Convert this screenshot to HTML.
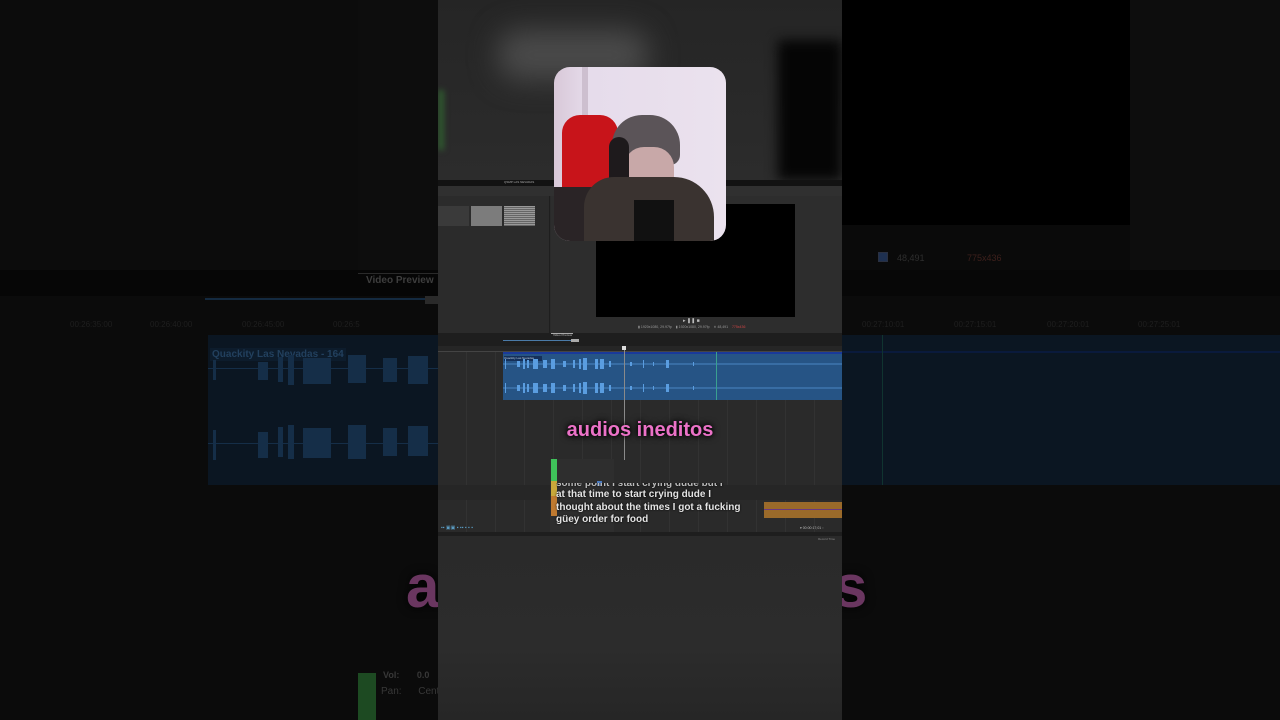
<!DOCTYPE html>
<html><head><meta charset="utf-8"><style>
*{margin:0;padding:0;box-sizing:border-box}
body{width:1280px;height:720px;overflow:hidden;background:#0b0b0b;position:relative;font-family:"Liberation Sans",sans-serif}
.a{position:absolute}
</style></head><body>
<div class="a" style="left:0;top:0;width:438px;height:270px;background:#0c0c0c"></div>
<div class="a" style="left:358px;top:0;width:80px;height:270px;background:#0d0d0d"></div>
<div class="a" style="left:0;top:270px;width:438px;height:26px;background:#060606"></div>
<div class="a" style="left:358px;top:273px;width:80px;height:1px;background:#2a2a2a"></div>
<div class="a" style="left:366px;top:275px;color:#3e3e3e;font-size:10px;font-weight:bold">Video Preview</div>
<div class="a" style="left:205px;top:298px;width:220px;height:2px;background:#142a40"></div>
<div class="a" style="left:425px;top:296px;width:13px;height:8px;background:#2a2a2a"></div>
<div class="a" style="left:0;top:320px;width:438px;height:14px;color:#1f1f1f;font-size:8px">
<span class="a" style="left:70px;top:0">00:26:35:00</span><span class="a" style="left:150px;top:0">00:26:40:00</span><span class="a" style="left:242px;top:0">00:26:45:00</span><span class="a" style="left:333px;top:0">00:26:5</span></div>
<div class="a" style="left:842px;top:0;width:288px;height:225px;background:#000"></div>
<div class="a" style="left:1130px;top:0;width:150px;height:270px;background:#0d0d0d"></div>
<div class="a" style="left:842px;top:225px;width:288px;height:45px;background:#0a0a0a"></div>
<div class="a" style="left:878px;top:252px;width:10px;height:10px;border:1px solid #2a3040;background:#1e3050"></div>
<div class="a" style="left:897px;top:253px;color:#2e2e2e;font-size:9px">48,491</div>
<div class="a" style="left:967px;top:253px;color:#3e201c;font-size:9px">775x436</div>
<div class="a" style="left:842px;top:270px;width:438px;height:26px;background:#070707"></div>
<div class="a" style="left:842px;top:320px;width:438px;height:14px;color:#1f1f1f;font-size:8px">
<span class="a" style="left:20px;top:0">00:27:10:01</span><span class="a" style="left:112px;top:0">00:27:15:01</span><span class="a" style="left:205px;top:0">00:27:20:01</span><span class="a" style="left:296px;top:0">00:27:25:01</span></div>
<div class="a" style="left:208px;top:335px;width:1072px;height:150px;background:#0b1622"></div>
<div class="a" style="left:842px;top:351px;width:438px;height:2px;background:#0a1a3c"></div>
<div class="a" style="left:882px;top:335px;width:1px;height:150px;background:#103430"></div>
<div class="a" style="left:210px;top:348px;color:#22405e;font-size:10px;font-weight:bold;background:#0d1c2c;padding:1px 2px">Quackity Las Nevadas - 164</div>
<svg class="a" style="left:208px;top:340px" width="230" height="150" style="filter:blur(1px)"><g fill="#152e48">
<rect x="0" y="28" width="230" height="1"/><rect x="0" y="103" width="230" height="1"/>
<rect x="5" y="20" width="3" height="20"/><rect x="50" y="22" width="10" height="18"/><rect x="70" y="17" width="5" height="25"/><rect x="80" y="15" width="6" height="30"/><rect x="95" y="18" width="28" height="26"/><rect x="140" y="15" width="18" height="28"/><rect x="175" y="18" width="14" height="24"/><rect x="200" y="16" width="20" height="28"/>
<rect x="5" y="90" width="3" height="30"/><rect x="50" y="92" width="10" height="26"/><rect x="70" y="87" width="5" height="30"/><rect x="80" y="85" width="6" height="34"/><rect x="95" y="88" width="28" height="30"/><rect x="140" y="85" width="18" height="34"/><rect x="175" y="88" width="14" height="28"/><rect x="200" y="86" width="20" height="30"/></g></svg>
<div class="a" style="left:358px;top:673px;width:18px;height:47px;background:#1d4a22"></div>
<div class="a" style="left:383px;top:670px;color:#383838;font-size:9px;font-weight:bold">Vol:&nbsp;&nbsp;&nbsp;&nbsp;&nbsp;&nbsp;&nbsp;0.0</div>
<div class="a" style="left:381px;top:686px;color:#383838;font-size:10px">Pan:&nbsp;&nbsp;&nbsp;&nbsp;&nbsp;&nbsp;Cent</div>
<div class="a" style="left:406px;top:552px;font-size:60px;font-weight:bold;color:#6a3660;text-shadow:0 0 10px #000">a</div>
<div class="a" style="left:834px;top:552px;font-size:60px;font-weight:bold;color:#6a3660;text-shadow:0 0 10px #000">s</div>

<div class="a" style="left:438px;top:0;width:404px;height:720px;background:#2a2a2a;overflow:hidden">
 <div class="a" style="left:0;top:0;width:404px;height:180px;background:linear-gradient(#252525,#2c2c2c)"></div>
 <div class="a" style="left:60px;top:30px;width:150px;height:50px;background:#4a4a4a;filter:blur(14px);border-radius:20px"></div>
 <div class="a" style="left:0;top:90px;width:6px;height:60px;background:#2f5a2f;filter:blur(3px)"></div>
 <div class="a" style="left:340px;top:40px;width:64px;height:140px;background:#050505;filter:blur(6px)"></div>
 <div class="a" style="left:0;top:180px;width:404px;height:6px;background:#121212"></div>
 <div class="a" style="left:66px;top:180px;color:#aaa;font-size:3px">QSMP LAS NEVADAS</div>
 <div class="a" style="left:0;top:186px;width:404px;height:10px;background:#303030"></div>
 <div class="a" style="left:0;top:196px;width:112px;height:137px;background:#2b2b2b;border-right:1px solid #1e1e1e"></div>
 <div class="a" style="left:0;top:206px;width:31px;height:20px;background:#3a3a3a"></div>
 <div class="a" style="left:33px;top:206px;width:31px;height:20px;background:#7c7c7c"></div>
 <div class="a" style="left:66px;top:206px;width:31px;height:20px;background:repeating-linear-gradient(#999 0 1px,#666 1px 2px)"></div>
 <div class="a" style="left:113px;top:196px;width:291px;height:137px;background:#2d2d2d"></div>
 <div class="a" style="left:158px;top:204px;width:199px;height:113px;background:#000"></div>
 <div class="a" style="left:245px;top:318px;color:#bbb;font-size:5px">▸ ❚❚ ■</div>
 <div class="a" style="left:200px;top:325px;color:#999;font-size:3.5px;white-space:nowrap">▮ 1920x1080, 29.97fp &nbsp;&nbsp; ▮ 1920x1080, 29.97fp &nbsp;&nbsp; ✕ 48,491 &nbsp;&nbsp; <span style="color:#c44">775x436</span></div>
 <div class="a" style="left:0;top:333px;width:404px;height:13px;background:#1e1e1e"></div>
 <div class="a" style="left:113px;top:333px;width:22px;height:1px;background:#aaa"></div>
 <div class="a" style="left:115px;top:333px;color:#bbb;font-size:3px">Video Preview</div>
 <div class="a" style="left:65px;top:340px;width:68px;height:1px;background:#4a7aa8"></div>
 <div class="a" style="left:133px;top:339px;width:8px;height:3px;background:#aaa"></div>
 <div class="a" style="left:0;top:346px;width:404px;height:6px;background:#262626;border-bottom:1px solid #444"></div>
 <div class="a" style="left:0;top:352px;width:404px;height:180px;background:repeating-linear-gradient(90deg,#2a2a2a 0 28px,#323232 28px 29px)"></div>
 <div class="a" style="left:0;top:485px;width:404px;height:15px;background:#262626"></div>
 <div class="a" style="left:65px;top:352px;width:339px;height:48px;background:#265485"></div>
 <div class="a" style="left:65px;top:352px;width:339px;height:2px;background:#1a3a9a"></div>
 <div class="a" style="left:66px;top:356px;width:38px;height:5px;background:#14305a;color:#bcd;font-size:3px">Quackity Las Nevadas</div>
 <svg class="a" style="left:65px;top:352px" width="339" height="48"><g fill="#5a9de0">
 <rect x="0" y="11.5" width="339" height="1" fill="#4a86c4"/><rect x="0" y="35.5" width="339" height="1" fill="#4a86c4"/>
 <rect x="2" y="7" width="1" height="10"/><rect x="14" y="9" width="3" height="6"/><rect x="20" y="7" width="2" height="10"/><rect x="24" y="8" width="2" height="8"/><rect x="30" y="7" width="5" height="10"/><rect x="40" y="8" width="4" height="8"/><rect x="48" y="7" width="4" height="10"/><rect x="60" y="9" width="3" height="6"/><rect x="70" y="8" width="2" height="8"/><rect x="76" y="7" width="2" height="10"/><rect x="80" y="6" width="4" height="12"/><rect x="92" y="7" width="3" height="10"/><rect x="97" y="7" width="4" height="10"/><rect x="106" y="9" width="2" height="6"/><rect x="127" y="10" width="2" height="4"/><rect x="140" y="8" width="1" height="8"/><rect x="150" y="10" width="1" height="4"/><rect x="163" y="8" width="3" height="8"/><rect x="190" y="10" width="1" height="4"/>
 <rect x="2" y="31" width="1" height="10"/><rect x="14" y="33" width="3" height="6"/><rect x="20" y="31" width="2" height="10"/><rect x="24" y="32" width="2" height="8"/><rect x="30" y="31" width="5" height="10"/><rect x="40" y="32" width="4" height="8"/><rect x="48" y="31" width="4" height="10"/><rect x="60" y="33" width="3" height="6"/><rect x="70" y="32" width="2" height="8"/><rect x="76" y="31" width="2" height="10"/><rect x="80" y="30" width="4" height="12"/><rect x="92" y="31" width="3" height="10"/><rect x="97" y="31" width="4" height="10"/><rect x="106" y="33" width="2" height="6"/><rect x="127" y="34" width="2" height="4"/><rect x="140" y="32" width="1" height="8"/><rect x="150" y="34" width="1" height="4"/><rect x="163" y="32" width="3" height="8"/><rect x="190" y="34" width="1" height="4"/></g>
 <rect x="213" y="0" width="1" height="48" fill="#3aa090"/></svg>
 <div class="a" style="left:186px;top:347px;width:1px;height:113px;background:#8a8a8a"></div>
 <div class="a" style="left:184px;top:346px;width:4px;height:4px;background:#ddd"></div>
 <div class="a" style="left:112px;top:459px;width:64px;height:73px;background:#2e2e2e"></div>
 <div class="a" style="left:113px;top:459px;width:6px;height:22px;background:#3fc25a"></div>
 <div class="a" style="left:113px;top:481px;width:6px;height:15px;background:#c9a83a"></div>
 <div class="a" style="left:113px;top:496px;width:6px;height:20px;background:#c07a30"></div>
 <div class="a" style="left:159px;top:481px;width:5px;height:5px;background:#4a7ac0"></div>
 <div class="a" style="left:326px;top:502px;width:78px;height:16px;background:#9a6a2a"></div>
 <div class="a" style="left:326px;top:509px;width:78px;height:1px;background:#6a3a80"></div>
 <div class="a" style="left:3px;top:526px;width:112px;height:5px;color:#5a9ac0;font-size:5px;line-height:5px">▪▪ ▣▣ ▪ ▪▪ ▪ ▪ ▪</div>
 <div class="a" style="left:0;top:532px;width:404px;height:4px;background:#1e1e1e"></div>
 <div class="a" style="left:362px;top:526px;color:#bbb;font-size:3.5px">▾ 00:00:17;01 ▫</div>
 <div class="a" style="left:0;top:536px;width:404px;height:184px;background:linear-gradient(#2a2a2a,#2c2c2c 60%,#262626)"></div>
 <div class="a" style="left:380px;top:537px;color:#888;font-size:3px">Record Time</div>
 <div class="a" style="left:118px;top:483px;color:#e4e4e4;font-size:10px;font-weight:bold;line-height:12.5px;white-space:nowrap;text-shadow:0 0 2px #000">
 <div style="height:6px;overflow:hidden;line-height:2px;color:#bbb">some point I start crying dude but I</div>
 <div>at that time to start crying dude I</div>
 <div>thought about the times I got a fucking</div>
 <div>güey order for food</div></div>
 <div class="a" style="left:116px;top:67px;width:172px;height:174px;border-radius:16px;overflow:hidden;background:linear-gradient(90deg,#d8c8d8,#e6dceb 20%,#ebe2ee)">
  <div class="a" style="left:28px;top:0;width:6px;height:174px;background:#cdbfcf"></div>
  <div class="a" style="left:8px;top:48px;width:56px;height:110px;background:#c8141a;border-radius:18px 18px 4px 4px"></div>
  <div class="a" style="left:0;top:120px;width:60px;height:54px;background:#2a2426"></div>
  <div class="a" style="left:58px;top:48px;width:68px;height:50px;background:#5b5458;border-radius:30px 30px 10px 10px"></div>
  <div class="a" style="left:70px;top:80px;width:50px;height:50px;background:#c8a8a8;border-radius:20px"></div>
  <div class="a" style="left:55px;top:70px;width:20px;height:70px;background:#1e1a1c;border-radius:10px"></div>
  <div class="a" style="left:30px;top:110px;width:130px;height:64px;background:#3a3330;border-radius:30px 40px 0 0"></div>
  <div class="a" style="left:80px;top:133px;width:40px;height:41px;background:#111"></div>
 </div>
 <div class="a" style="left:0;top:419px;width:404px;text-align:center;font-size:20px;font-weight:bold;color:#ec72c8;text-shadow:0 0 4px #000,0 0 8px #000">audios ineditos</div>
</div>
</body></html>
